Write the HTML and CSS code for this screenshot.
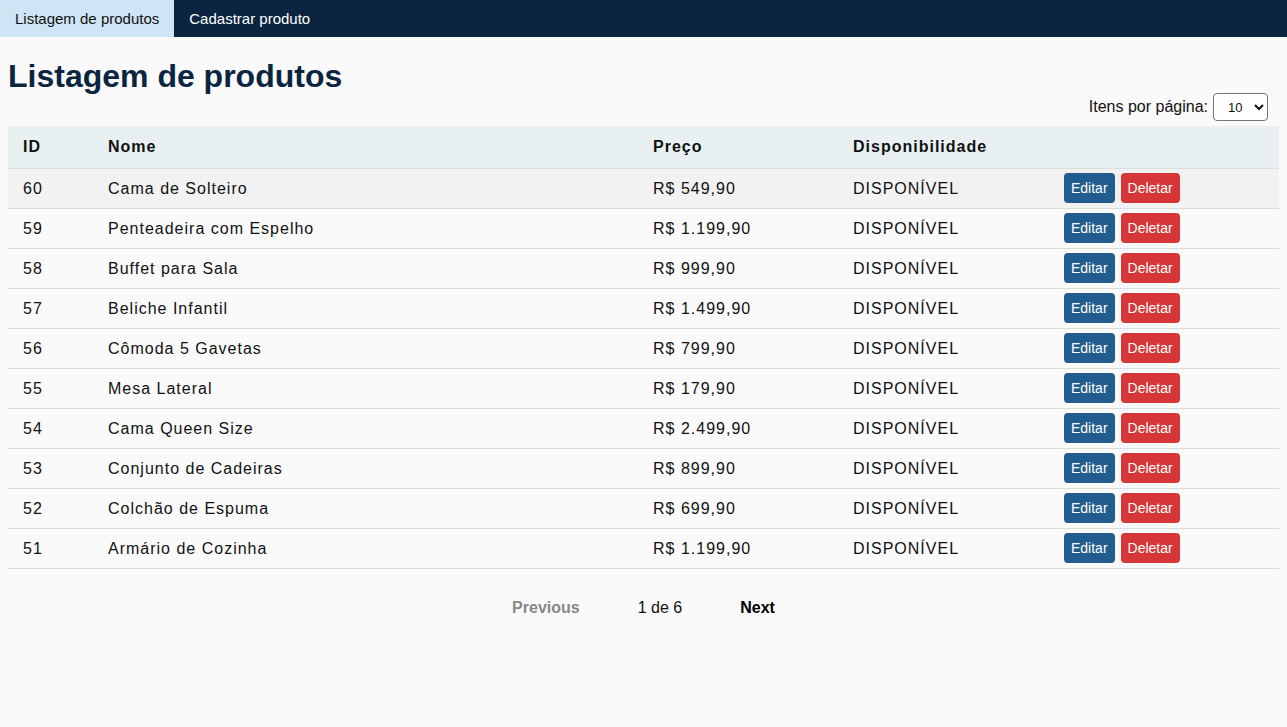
FILE: index.html
```html
<!DOCTYPE html>
<html lang="pt-BR">
<head>
<meta charset="utf-8">
<title>Listagem de produtos</title>
<link rel="stylesheet" href="styles.css">
</head>
<body>
<nav class="topnav">
  <a class="tab tab-active" href="#">Listagem de produtos</a>
  <a class="tab" href="#">Cadastrar produto</a>
</nav>
<main class="page">
  <h1 class="title">Listagem de produtos</h1>
  <div class="controls">
    <label class="per-page-label" for="perPage">Itens por página:</label>
    <select id="perPage" class="per-page">
      <option>10</option>
      <option>20</option>
      <option>50</option>
    </select>
  </div>
  <table class="products">
    <thead>
      <tr>
        <th class="col-id">ID</th>
        <th class="col-name">Nome</th>
        <th class="col-price">Preço</th>
        <th class="col-avail">Disponibilidade</th>
        <th class="col-actions"></th>
      </tr>
    </thead>
    <tbody>
      <tr class="row-hover"><td>60</td><td>Cama de Solteiro</td><td>R$ 549,90</td><td>DISPONÍVEL</td><td><div class="actions"><button class="btn btn-edit">Editar</button><button class="btn btn-delete">Deletar</button></div></td></tr>
      <tr><td>59</td><td>Penteadeira com Espelho</td><td>R$ 1.199,90</td><td>DISPONÍVEL</td><td><div class="actions"><button class="btn btn-edit">Editar</button><button class="btn btn-delete">Deletar</button></div></td></tr>
      <tr><td>58</td><td>Buffet para Sala</td><td>R$ 999,90</td><td>DISPONÍVEL</td><td><div class="actions"><button class="btn btn-edit">Editar</button><button class="btn btn-delete">Deletar</button></div></td></tr>
      <tr><td>57</td><td>Beliche Infantil</td><td>R$ 1.499,90</td><td>DISPONÍVEL</td><td><div class="actions"><button class="btn btn-edit">Editar</button><button class="btn btn-delete">Deletar</button></div></td></tr>
      <tr><td>56</td><td>Cômoda 5 Gavetas</td><td>R$ 799,90</td><td>DISPONÍVEL</td><td><div class="actions"><button class="btn btn-edit">Editar</button><button class="btn btn-delete">Deletar</button></div></td></tr>
      <tr><td>55</td><td>Mesa Lateral</td><td>R$ 179,90</td><td>DISPONÍVEL</td><td><div class="actions"><button class="btn btn-edit">Editar</button><button class="btn btn-delete">Deletar</button></div></td></tr>
      <tr><td>54</td><td>Cama Queen Size</td><td>R$ 2.499,90</td><td>DISPONÍVEL</td><td><div class="actions"><button class="btn btn-edit">Editar</button><button class="btn btn-delete">Deletar</button></div></td></tr>
      <tr><td>53</td><td>Conjunto de Cadeiras</td><td>R$ 899,90</td><td>DISPONÍVEL</td><td><div class="actions"><button class="btn btn-edit">Editar</button><button class="btn btn-delete">Deletar</button></div></td></tr>
      <tr><td>52</td><td>Colchão de Espuma</td><td>R$ 699,90</td><td>DISPONÍVEL</td><td><div class="actions"><button class="btn btn-edit">Editar</button><button class="btn btn-delete">Deletar</button></div></td></tr>
      <tr><td>51</td><td>Armário de Cozinha</td><td>R$ 1.199,90</td><td>DISPONÍVEL</td><td><div class="actions"><button class="btn btn-edit">Editar</button><button class="btn btn-delete">Deletar</button></div></td></tr>
    </tbody>
  </table>
  <div class="pagination">
    <button class="page-btn page-disabled">Previous</button>
    <span class="page-info">1 de 6</span>
    <button class="page-btn">Next</button>
  </div>
</main>
</body>
</html>
```

FILE: styles.css
```css
* { box-sizing: border-box; }

html, body {
  margin: 0;
  padding: 0;
  background: #fafafa;
  font-family: "Liberation Sans", Arial, sans-serif;
  color: #111;
}

.topnav {
  display: flex;
  height: 37px;
  background: #0b2540;
}

.tab {
  display: block;
  padding: 0 15px;
  line-height: 37px;
  font-size: 15px;
  color: #ffffff;
  text-decoration: none;
}

.tab-active {
  background: #cde5f4;
  color: #111;
}

.page {
  padding: 0 8px;
}

.title {
  margin: 22px 0 0;
  font-size: 32px;
  line-height: 34px;
  font-weight: bold;
  color: #0b2540;
}

.controls {
  display: flex;
  justify-content: flex-end;
  align-items: center;
  gap: 5px;
  height: 28px;
  margin-bottom: 5px;
  padding-right: 11px;
}

.per-page-label {
  font-size: 16px;
  color: #111;
}

.per-page {
  width: 55px;
  height: 28px;
  font-size: 13px;
  font-family: "Liberation Sans", Arial, sans-serif;
  padding: 0 4px 0 10px;
  border: 1px solid #767676;
  border-radius: 4px;
  background: #fff;
  color: #111;
}

.products {
  width: 100%;
  border-collapse: collapse;
  table-layout: fixed;
  font-size: 16px;
  letter-spacing: 1px;
}

.col-id { width: 85px; }
.col-name { width: 545px; }
.col-price { width: 200px; }
.col-avail { width: 211px; }
.col-actions { width: auto; }

.products thead tr {
  background: #e8f0f2;
}

.products th {
  text-align: left;
  font-weight: bold;
  padding: 0 15px;
  height: 42px;
  line-height: 18px;
  border-bottom: 1px solid #dcdcdc;
}

.products td {
  padding: 1px 15px 0;
  height: 40px;
  line-height: 18px;
  border-bottom: 1px solid #dcdcdc;
  white-space: nowrap;
}

.row-hover {
  background: #f2f2f2;
}

.actions {
  display: flex;
  gap: 6px;
  margin-top: -1px;
}

.btn {
  height: 30px;
  padding: 0 7px;
  border: none;
  border-radius: 4px;
  font-family: "Liberation Sans", Arial, sans-serif;
  font-size: 14px;
  letter-spacing: 0;
  color: #fff;
  cursor: pointer;
}

.btn-edit { background: #225d90; }
.btn-delete { background: #d63638; }

.pagination {
  display: flex;
  justify-content: center;
  align-items: center;
  gap: 58px;
  margin-top: 20px;
}

.page-btn {
  background: none;
  border: none;
  padding: 10px 0;
  font-family: "Liberation Sans", Arial, sans-serif;
  font-size: 16px;
  font-weight: bold;
  line-height: 18px;
  color: #000;
  cursor: pointer;
}

.page-disabled {
  color: #888;
}

.page-info {
  font-size: 16px;
  line-height: 18px;
  color: #111;
}
```
